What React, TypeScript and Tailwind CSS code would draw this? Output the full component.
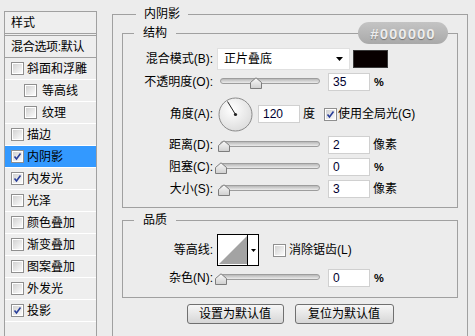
import React from 'react'

type Item = { label: string; on?: boolean; sub?: boolean; active?: boolean }

const items: Item[] = [
  { label: '斜面和浮雕' },
  { label: '等高线', sub: true },
  { label: '纹理', sub: true },
  { label: '描边' },
  { label: '内阴影', on: true, active: true },
  { label: '内发光', on: true },
  { label: '光泽' },
  { label: '颜色叠加' },
  { label: '渐变叠加' },
  { label: '图案叠加' },
  { label: '外发光' },
  { label: '投影', on: true },
]

function Check({ on }: { on?: boolean }) {
  return (
    <span className="relative inline-flex w-[13px] h-[13px] shrink-0 border border-[#8f8f8f] bg-white p-[1px]">
      <span className="block w-full h-full bg-gradient-to-br from-[#d2d2d2] to-[#fbfbfb]" />
      {on && (
        <svg className="absolute left-[1px] top-[1px]" width="9" height="9" viewBox="0 0 9 9">
          <path d="M1.5 4.5 L3.5 7 L7.5 1.5" fill="none" stroke="#2a3f9a" strokeWidth="1.6" />
        </svg>
      )}
    </span>
  )
}

function Sidebar() {
  return (
    <div className="ml-[4px] mt-[11px] w-[93px] h-[330px] shrink-0 border-x border-t border-[#a0a0a0] bg-[#eeeeee]">
      <div className="h-[22px] border-b border-[#a0a0a0] pl-[6px] flex items-center leading-none">样式</div>
      <div className="mt-[1px] border-t border-[#a0a0a0]">
        <div className="h-[22px] border-b border-[#a0a0a0] pl-[6px] flex items-center whitespace-nowrap tracking-[-0.3px]">
          混合选项:默认
        </div>
        {items.map((it) => (
          <div
            key={it.label}
            className={`h-[22px] border-b border-white flex items-center gap-[3px] whitespace-nowrap ${
              it.sub ? 'pl-[19px]' : 'pl-[6px]'
            } ${it.active ? 'bg-[#3399ff]' : ''}`}
          >
            <Check on={it.on} />
            <span className={it.sub ? 'ml-[2px]' : ''}>{it.label}</span>
          </div>
        ))}
      </div>
    </div>
  )
}

function Label({ children }: { children: React.ReactNode }) {
  return <div className="w-[90px] shrink-0 text-right whitespace-nowrap">{children}</div>
}

function Slider({ at }: { at: number }) {
  return (
    <div className="relative ml-[7px] w-[100px] h-[12px] shrink-0">
      <div className="absolute left-0 right-0 top-[2px] h-[6px] rounded-full border border-[#9d9d9d] bg-gradient-to-b from-[#b9b9b9] to-[#ececec]" />
      <svg className="absolute top-[1px]" style={{ left: at - 6 }} width="12" height="12" viewBox="0 0 12 12">
        <defs>
          <linearGradient id="th" x1="0" y1="0" x2="0" y2="1">
            <stop offset="0" stopColor="#fafafa" />
            <stop offset="1" stopColor="#cfcfcf" />
          </linearGradient>
        </defs>
        <path d="M0.5 5.5 L6 0.8 L11.5 5.5 L11.5 11.5 L0.5 11.5 Z" fill="url(#th)" stroke="#7d7d7d" />
      </svg>
    </div>
  )
}

function Field({ value, className = '' }: { value: string; className?: string }) {
  return (
    <div
      className={`w-[42px] h-[18px] shrink-0 bg-white border border-[#d0d0d0] pl-[4px] flex items-center leading-none text-[#000030] ${className}`}
    >
      {value}
    </div>
  )
}

function SliderRow({ label, at, value, unit }: { label: React.ReactNode; at: number; value: string; unit: string }) {
  return (
    <div className="h-[22px] flex items-center">
      <Label>{label}</Label>
      <Slider at={at} />
      <Field value={value} className="ml-[8px]" />
      <span className="ml-[3px]">{unit}</span>
    </div>
  )
}

function Dial() {
  return (
    <svg width="35" height="35" viewBox="0 0 35 35" className="shrink-0">
      <defs>
        <radialGradient id="dial" cx="0.4" cy="0.35" r="0.7">
          <stop offset="0" stopColor="#ffffff" />
          <stop offset="1" stopColor="#dcdcdc" />
        </radialGradient>
      </defs>
      <circle cx="17.5" cy="17.5" r="16.5" fill="url(#dial)" stroke="#8a8a8a" />
      <line x1="17.5" y1="17.5" x2="9.5" y2="4.5" stroke="#222" strokeWidth="1" />
      <circle cx="17.5" cy="17.5" r="1.6" fill="#222" />
    </svg>
  )
}

function Legend({ children }: { children: React.ReactNode }) {
  return <legend className="ml-[11px] px-[9px] leading-[16px]">{children}</legend>
}

function Btn({ children, w }: { children: React.ReactNode; w: string }) {
  return (
    <button
      className={`${w} h-[20px] rounded-[3px] border border-[#707070] bg-gradient-to-b from-[#f7f7f7] to-[#d6d6d6] flex items-center justify-center leading-none`}
    >
      {children}
    </button>
  )
}

export default function App() {
  return (
    <div className="w-[475px] h-[336px] overflow-hidden bg-[#ececec] flex text-[12px] text-black [font-family:'Liberation_Sans','Noto_Sans_CJK_SC',sans-serif]">
      <Sidebar />

      <div className="relative ml-[15px] mt-[6px] w-[356px] shrink-0">
        <fieldset className="border border-[#a0a0a0] px-[9px] pt-[3px] pb-[30px]">
          <legend className="ml-[14px] px-[8px] leading-[16px]">内阴影</legend>

          <fieldset className="border border-[#a0a0a0] pt-[7px] pb-[7px]">
            <Legend>结构</Legend>

            <div className="h-[22px] flex items-center">
              <Label>混合模式(B):</Label>
              <div className="ml-[4px] w-[133px] h-[22px] bg-white border border-[#e0e0e0] pl-[6px] pr-[6px] flex items-center justify-between">
                <span>正片叠底</span>
                <svg width="7" height="4" viewBox="0 0 7 4">
                  <path d="M0 0 H7 L3.5 4 Z" fill="#000" />
                </svg>
              </div>
              <div className="ml-[3px] w-[35px] h-[18px] bg-[#080000] border border-[#3a3a3a]" />
            </div>

            <div className="h-[24px] flex items-center">
              <Label>不透明度(O):</Label>
              <Slider at={36} />
              <Field value="35" className="ml-[8px]" />
              <span className="ml-[4px] font-bold text-[11px]">%</span>
            </div>

            <div className="h-[40px] flex items-center">
              <Label>角度(A):</Label>
              <div className="ml-[5px]">
                <Dial />
              </div>
              <Field value="120" className="ml-[5px]" />
              <span className="ml-[3px]">度</span>
              <span className="ml-[9px] flex items-center gap-[1px] whitespace-nowrap">
                <Check on />
                <span>使用全局光(G)</span>
              </span>
            </div>

            <SliderRow label="距离(D):" at={4} value="2" unit="像素" />
            <div className="h-[22px] flex items-center">
              <Label>阻塞(C):</Label>
              <Slider at={1} />
              <Field value="0" className="ml-[8px]" />
              <span className="ml-[4px] font-bold text-[11px]">%</span>
            </div>
            <SliderRow label="大小(S):" at={4} value="3" unit="像素" />
          </fieldset>

          <fieldset className="mt-[4px] border border-[#a0a0a0] pt-[5px] pb-[8px]">
            <Legend>品质</Legend>

            <div className="h-[34px] flex items-center">
              <Label>等高线:</Label>
              <div className="ml-[4px] w-[42px] h-[32px] border border-black bg-white flex">
                <div className="w-[30px] h-full p-[1px] border-r border-black">
                  <svg width="28" height="28" viewBox="0 0 28 28" className="block">
                    <path d="M0 28 L28 0 L28 28 Z" fill="#a3a3a3" />
                  </svg>
                </div>
                <div className="flex-1 flex items-center justify-center">
                  <svg width="5" height="3" viewBox="0 0 5 3">
                    <path d="M0 0 H5 L2.5 3 Z" fill="#000" />
                  </svg>
                </div>
              </div>
              <span className="ml-[14px] flex items-center gap-[3px] whitespace-nowrap">
                <Check />
                <span>消除锯齿(L)</span>
              </span>
            </div>

            <div className="h-[22px] flex items-center">
              <Label>杂色(N):</Label>
              <Slider at={1} />
              <Field value="0" className="ml-[8px]" />
              <span className="ml-[4px] font-bold text-[11px]">%</span>
            </div>
          </fieldset>

          <div className="mt-[6px] flex justify-center gap-[11px]">
            <Btn w="w-[97px]">设置为默认值</Btn>
            <Btn w="w-[99px]">复位为默认值</Btn>
          </div>
        </fieldset>

        <div className="absolute left-[246px] top-[16px] w-[90px] h-[22px] rounded-full bg-gradient-to-b from-[#c4c4c4] to-[#a9a9a9] flex items-center justify-center font-bold text-[15px] tracking-[1px] text-[#ececec] [text-shadow:0_1px_1px_rgba(0,0,0,0.35)] leading-none">
          #000000
        </div>
      </div>
    </div>
  )
}
